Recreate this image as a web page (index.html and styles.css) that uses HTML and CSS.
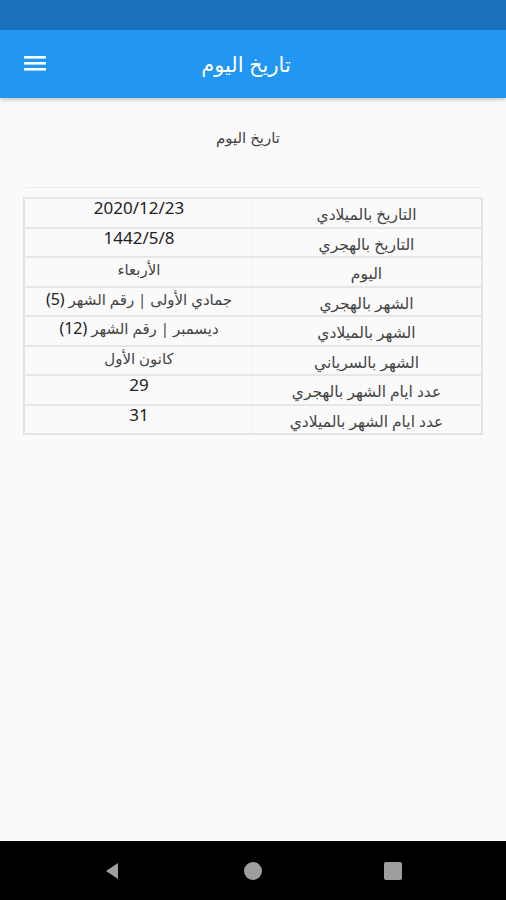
FILE: index.html
```html
<!DOCTYPE html>
<html lang="ar" dir="rtl">
<head>
  <meta charset="UTF-8" />
  <meta name="viewport" content="width=device-width, initial-scale=1.0" />
  <title>تاريخ اليوم</title>
  <link rel="stylesheet" href="styles.css">
</head>
<body>
  <div class="phone">
    <div class="status-bar"></div>
    <header class="app-bar">
      <span class="app-title">تاريخ اليوم</span>
      <button class="menu-btn" aria-label="القائمة">
        <svg width="22" height="18" viewBox="0 0 22 18">
          <rect x="0" y="2" width="22" height="2.6" fill="#fff"/>
          <rect x="0" y="8" width="22" height="2.6" fill="#fff"/>
          <rect x="0" y="14" width="22" height="2.6" fill="#fff"/>
        </svg>
      </button>
    </header>

    <main class="content">
      <h2 class="page-title">تاريخ اليوم</h2>
      <hr class="divider" />
      <table class="date-table">
        <tr><td class="label">التاريخ بالميلادي</td><td class="value">2020/12/23</td></tr>
        <tr><td class="label">التاريخ بالهجري</td><td class="value">1442/5/8</td></tr>
        <tr><td class="label">اليوم</td><td class="value text">الأربعاء</td></tr>
        <tr><td class="label">الشهر بالهجري</td><td class="value text">جمادي الأولى | رقم الشهر <span class="num">(5)</span></td></tr>
        <tr><td class="label">الشهر بالميلادي</td><td class="value text">ديسمبر | رقم الشهر <span class="num">(12)</span></td></tr>
        <tr><td class="label">الشهر بالسرياني</td><td class="value text">كانون الأول</td></tr>
        <tr><td class="label">عدد ايام الشهر بالهجري</td><td class="value">29</td></tr>
        <tr><td class="label">عدد ايام الشهر بالميلادي</td><td class="value">31</td></tr>
      </table>
    </main>

    <nav class="nav-bar">
      <svg class="nav-icon" width="20" height="20" viewBox="0 0 20 20"><polygon points="3,10 15,2 15,18" fill="#9e9e9e"/></svg>
      <svg class="nav-icon" width="20" height="20" viewBox="0 0 20 20"><circle cx="10" cy="10" r="9" fill="#9e9e9e"/></svg>
      <svg class="nav-icon" width="20" height="20" viewBox="0 0 20 20"><rect x="1" y="1" width="18" height="18" rx="2" fill="#9e9e9e"/></svg>
    </nav>
  </div>
</body>
</html>
```

FILE: styles.css
```css
html, body {
  margin: 0;
  padding: 0;
}
body {
  font-family: "Noto Sans", "DejaVu Sans", sans-serif;
  background: #fafafa;
}
.phone {
  display: flex;
  flex-direction: column;
  height: 900px;
}
.status-bar {
  height: 30px;
  background: #1a72bd;
}
.app-bar {
  height: 68px;
  background: #2196f3;
  display: flex;
  align-items: center;
  position: relative;
  box-shadow: 0 2px 4px rgba(0,0,0,0.2);
}
.app-title {
  flex: 1;
  text-align: center;
  color: #fff;
  font-size: 21px;
  padding-right: 14px;
}
.menu-btn {
  position: absolute;
  left: 24px;
  top: 24px;
  background: none;
  border: none;
  padding: 0;
  width: 22px;
  height: 18px;
}
.content {
  flex: 1;
  padding: 0 23px;
}
.page-title {
  margin: 29px 0 0;
  font-weight: normal;
  font-size: 15px;
  color: #444;
  text-align: center;
  padding-right: 10px;
}
.divider {
  border: none;
  border-top: 1px solid #eeeeee;
  margin: 40px 2px 9px;
}
.date-table {
  width: 460px;
  border-collapse: collapse;
  border: 2px solid #e3e3e3;
  font-size: 15.5px;
}
.date-table td {
  height: 27.5px;
  padding: 0;
  text-align: center;
  border-top: 2px solid #e6e6e6;
  line-height: 18px;
}
.date-table td.label {
  width: 229px;
  color: #444;
  padding-top: 6px;
  vertical-align: top;
  height: 21.5px;
  border-left: 1px solid #f0f0f0;
}
.date-table td.value {
  color: #222;
  font-size: 17px;
  vertical-align: top;
  padding-top: 0;
  padding-left: 2px;
}
.date-table td.value.text {
  font-size: 15px;
  color: #444;
  padding-top: 2px;
  height: 25.5px;
}
.num {
  font-size: 16px;
  color: #222;
}
.nav-bar {
  height: 59px;
  background: #000;
  display: flex;
  direction: ltr;
  align-items: center;
  justify-content: space-between;
  padding: 0 103px;
}
.nav-icon {
  display: block;
}
```
